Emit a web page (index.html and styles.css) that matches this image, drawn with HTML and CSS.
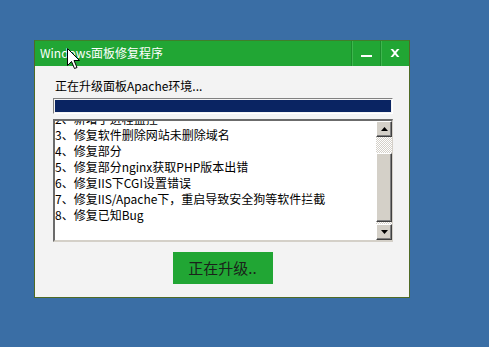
FILE: index.html
```html
<!DOCTYPE html>
<html lang="zh-CN">
<head>
<meta charset="utf-8">
<title>Windows面板修复程序</title>
<link rel="stylesheet" href="styles.css">
</head>
<body>
<div class="window">
  <div class="titlebar">
    <div class="title">Windows面板修复程序</div>
    <div class="tbtn min"><span class="minbar"></span></div>
    <div class="tbtn close">
      <svg width="10" height="8" viewBox="0 0 10 8"><path d="M0.5 0h2.5l2 2.5L7 0h2.5L6.2 4l3.3 4H7L5 5.5 3 8H0.5l3.3-4z" fill="#fff"/></svg>
    </div>
  </div>
  <div class="content">
    <div class="label">正在升级面板Apache环境...</div>
    <div class="progress"><div class="fill"></div></div>
    <div class="listbox">
      <div class="items">
        <div class="inner">
          <div class="line">2、新增了进程监控</div>
          <div class="line">3、修复软件删除网站未删除域名</div>
          <div class="line">4、修复部分</div>
          <div class="line">5、修复部分nginx获取PHP版本出错</div>
          <div class="line">6、修复IIS下CGI设置错误</div>
          <div class="line">7、修复IIS/Apache下，重启导致安全狗等软件拦截</div>
          <div class="line">8、修复已知Bug</div>
        </div>
      </div>
      <div class="scrollbar">
        <div class="sbtn"><svg width="7" height="4" viewBox="0 0 7 4"><path d="M3.5 0L7 4H0z" fill="#000"/></svg></div>
        <div class="track">
          <div class="gap-top"></div>
          <div class="thumb"></div>
          <div class="gap-bot"></div>
        </div>
        <div class="sbtn"><svg width="7" height="4" viewBox="0 0 7 4"><path d="M0 0h7L3.5 4z" fill="#000"/></svg></div>
      </div>
    </div>
    <div class="actions">
      <div class="upgrade">正在升级..</div>
    </div>
  </div>
</div>
<svg class="cursor" width="13" height="21" viewBox="0 0 13 21"><path d="M0.5 0.5V17.5L4.5 13.5L7.5 20.5L10 19.5L7 12.5H12.5Z" fill="#fff" stroke="#000" stroke-width="1"/></svg>
</body>
</html>
```
FILE: styles.css
```css
html, body {
  margin: 0;
  padding: 0;
}
body {
  width: 489px;
  height: 347px;
  background: #3a6ea5;
  font-family: "Noto Sans CJK SC", "Noto Sans", sans-serif;
  font-size: 12px;
  color: #000;
  overflow: hidden;
  position: relative;
}
.window {
  margin: 40px 0 0 34px;
  width: 376px;
  height: 258px;
  box-sizing: border-box;
  border: 1px solid #4f6a25;
  border-top-color: #3f7f2a;
  background: #f3f3f3;
  display: flex;
  flex-direction: column;
}
.titlebar {
  height: 25px;
  background: #21a634;
  display: flex;
  align-items: stretch;
  flex: none;
}
.title {
  flex: 1;
  color: #fff;
  padding-left: 5px;
  line-height: 24px;
  font-size: 12px;
}
.tbtn {
  width: 28px;
  border-left: 1px solid #1b8d2b;
  box-shadow: inset 1px 0 #3fb54f;
  display: flex;
  align-items: center;
  justify-content: center;
}
.minbar {
  width: 11px;
  height: 2px;
  background: #fff;
  margin-top: 4px;
}
.close svg {
  margin-top: -1px;
}
.content {
  flex: 1;
  padding: 0 17px 0 18px;
  display: flex;
  flex-direction: column;
}
.label {
  margin-top: 12px;
  line-height: 16px;
  padding-left: 2px;
}
.progress {
  margin-top: 4px;
  height: 16px;
  width: 340px;
  box-sizing: border-box;
  border-top: 1px solid #808080;
  border-left: 1px solid #808080;
  border-right: 1px solid #fff;
  border-bottom: 1px solid #fff;
  padding: 1px;
}
.fill {
  height: 100%;
  background: #0a2462;
}
.listbox {
  margin-top: 5px;
  width: 340px;
  height: 123px;
  box-sizing: border-box;
  border-top: 2px solid #6b6b6b;
  border-left: 2px solid #6b6b6b;
  border-right: 1px solid #d4d0c8;
  border-bottom: 2px solid #d4d0c8;
  background: #fff;
  display: flex;
}
.items {
  flex: 1;
  overflow: hidden;
}
.inner {
  margin-top: -10px;
}
.line {
  line-height: 16px;
  height: 16px;
  white-space: nowrap;
}
.scrollbar {
  width: 16px;
  display: flex;
  flex-direction: column;
}
.sbtn {
  height: 16px;
  box-sizing: border-box;
  background: #d4d0c8;
  border: 1px solid;
  border-color: #fff #404040 #404040 #fff;
  box-shadow: inset -1px -1px #808080;
  display: flex;
  align-items: center;
  justify-content: center;
  flex: none;
}
.track {
  flex: 1;
  display: flex;
  flex-direction: column;
  background: repeating-conic-gradient(#ffffff 0 25%, #d4d0c8 0 50%) 0 0 / 2px 2px;
}
.gap-top {
  height: 16px;
}
.thumb {
  height: 69px;
  box-sizing: border-box;
  background: #d4d0c8;
  border: 1px solid;
  border-color: #fff #404040 #404040 #fff;
  box-shadow: inset -1px -1px #808080;
}
.gap-bot {
  flex: 1;
}
.actions {
  display: flex;
  justify-content: center;
  margin-top: 10px;
}
.upgrade {
  width: 100px;
  height: 32px;
  background: #21a634;
  color: #1a221a;
  font-size: 15px;
  line-height: 32px;
  text-align: center;
}
.cursor {
  position: absolute;
  left: 67px;
  top: 48px;
}
```
